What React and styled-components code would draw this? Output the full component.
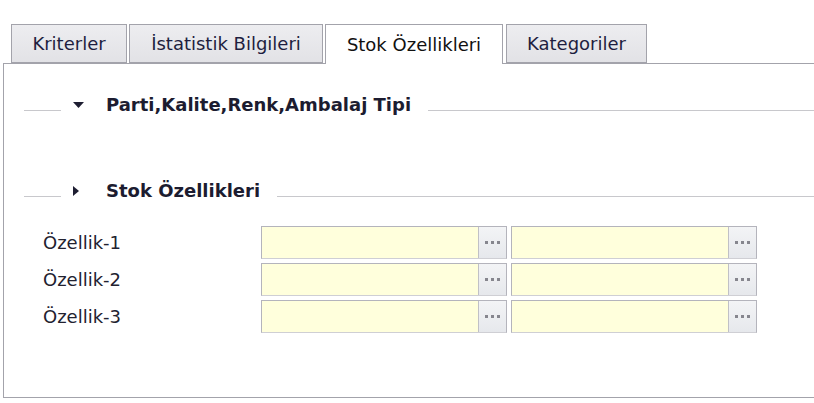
import React, { useState } from 'react'
import styled, { createGlobalStyle } from 'styled-components'

const GlobalStyle = createGlobalStyle`
    html, body {
        margin: 0;
        padding: 0;
        background: #ffffff;
        overflow: hidden;
    }
    body {
        font-family: "DejaVu Sans", Verdana, sans-serif;
        color: #1e1e32;
    }
`

const tabs = [
    { label: 'Kriterler', width: 116 },
    { label: 'İstatistik Bilgileri', width: 194 },
    { label: 'Stok Özellikleri', width: 178 },
    { label: 'Kategoriler', width: 141 },
]
const rows = ['Özellik-1', 'Özellik-2', 'Özellik-3']

const DotsIcon = () => (
    <svg width="15" height="3" viewBox="0 0 15 3">
        <rect x="0" y="0" width="3" height="3" fill="#86868e" />
        <rect x="6" y="0" width="3" height="3" fill="#86868e" />
        <rect x="12" y="0" width="3" height="3" fill="#86868e" />
    </svg>
)

export default function App() {
    const [active, setActive] = useState(2)

    return (
        <>
            <GlobalStyle />
            <Page>
                <TabBar>
                    {tabs.map((t, i) => (
                        <Tab key={t.label} w={t.width} active={i === active} onClick={() => setActive(i)}>{t.label}</Tab>
                    ))}
                </TabBar>
                <Panel>
                    <Section>
                        <Line width="37px" />
                        <Arrow>
                            <svg width="11" height="6" viewBox="0 0 11 6"><path d="M0 0 L11 0 L5.5 6 Z" fill="#1e1e32" /></svg>
                        </Arrow>
                        <Title>Parti,Kalite,Renk,Ambalaj Tipi</Title>
                        <Line grow />
                    </Section>
                    <Section second>
                        <Line width="37px" />
                        <Arrow>
                            <svg width="6" height="10" viewBox="0 0 6 10"><path d="M0 0 L6 5 L0 10 Z" fill="#1e1e32" /></svg>
                        </Arrow>
                        <Title>Stok Özellikleri</Title>
                        <Line grow />
                    </Section>
                    <Form>
                        {rows.map(r => (
                            <Row key={r}>
                                <Label>{r}</Label>
                                <Lookup>
                                    <Input />
                                    <Dots><DotsIcon /></Dots>
                                </Lookup>
                                <Lookup>
                                    <Input />
                                    <Dots><DotsIcon /></Dots>
                                </Lookup>
                            </Row>
                        ))}
                    </Form>
                </Panel>
            </Page>
        </>
    )
}

const Page = styled.div`
    padding-top: 24px;
    padding-left: 3px;
    width: 830px;
`

const TabBar = styled.div`
    display: flex;
    gap: 2px;
    padding-left: 8px;
    height: 39px;
    position: relative;
    z-index: 1;
`

const Tab = styled.div`
    box-sizing: border-box;
    width: ${({w}) => w}px;
    height: ${({active}) => active ? '40px' : '39px'};
    display: flex;
    align-items: center;
    justify-content: center;
    white-space: nowrap;
    font-size: 18px;
    border: 1px solid #a3a3ab;
    border-bottom: ${({active}) => active ? 'none' : '1px solid #a3a3ab'};
    background: ${({active}) => active ? '#ffffff' : 'linear-gradient(#ededf0, #e2e2e6)'};
    color: ${({active}) => active ? '#111111' : '#1e1e40'};
    cursor: pointer;
    margin-right: ${({active}) => active ? '1px' : '0'};
`

const Panel = styled.div`
    box-sizing: border-box;
    border: 1px solid #a3a3ab;
    border-right: none;
    height: 335px;
    padding-top: 26px;
    padding-left: 20px;
`

const Section = styled.div`
    display: flex;
    align-items: center;
    height: 28px;
    margin-top: ${({second}) => second ? '58px' : '0'};
`

const Line = styled.div`
    height: 1px;
    background: #c8c8cc;
    width: ${({width}) => width || 'auto'};
    flex: ${({grow}) => grow ? '1' : 'none'};
    margin-top: 12px;
`

const Arrow = styled.div`
    width: 33px;
    padding-left: 12px;
    display: flex;
    justify-content: flex-start;
    margin-top: 2px;
`

const Title = styled.div`
    font-weight: bold;
    font-size: 18px;
    color: #1c1c30;
    padding-right: 17px;
`

const Form = styled.div`
    display: flex;
    flex-direction: column;
    gap: 4px;
    margin-top: 22px;
    padding-left: 19px;
`

const Row = styled.div`
    display: flex;
    align-items: center;
    gap: 4px;
    height: 33px;
`

const Label = styled.div`
    width: 214px;
    font-size: 18px;
    color: #222230;
`

const Lookup = styled.div`
    display: flex;
    height: 33px;
    box-sizing: border-box;
    border: 1px solid #b4b4bc;
    border-bottom-color: #cfcfd4;
`

const Input = styled.div`
    width: 216px;
    background: #ffffdc;
    border-right: 1px solid #c0c0c6;
`

const Dots = styled.div`
    width: 27px;
    background: linear-gradient(#f3f4f6, #e6e8ec);
    display: flex;
    align-items: center;
    justify-content: center;
`
